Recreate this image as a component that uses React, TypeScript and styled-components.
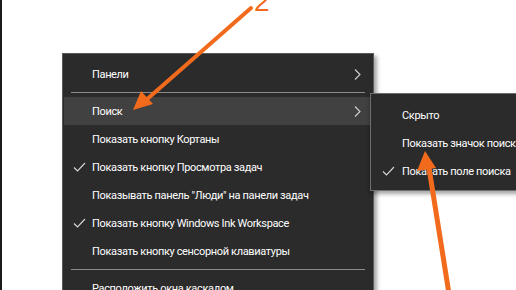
import * as React from 'react';
import styled, { createGlobalStyle } from 'styled-components';

const GlobalStyle = createGlobalStyle`
  html, body {
    margin: 0;
    padding: 0;
    background: #ffffff;
  }
  body {
    font-family: Roboto, "Noto Sans", "Liberation Sans", sans-serif;
  }
`;

const Page = styled.div`
  position: relative;
  width: 516px;
  height: 290px;
  overflow: hidden;
  box-sizing: border-box;
  border-left: 2px solid #1b1b1b;
  padding: 53px 0 0 60px;
  background: #fff;
`;

const Menu = styled.ul`
  list-style: none;
  margin: 0;
  padding: 6px 0;
  width: 310px;
  background: #2b2b2b;
  border: 1px solid #5a5a5a;
  box-shadow: 3px 3px 4px rgba(0, 0, 0, 0.35);
`;

const Item = styled.li<{ $active?: boolean }>`
  position: relative;
  display: flex;
  align-items: center;
  height: 28px;
  margin: 0 1px;
  padding-left: 28px;
  padding-right: 10px;
  background: ${(p) => (p.$active ? '#414141' : 'transparent')};
  color: #ffffff;
  font-size: 11px;
  letter-spacing: -0.35px;
  white-space: nowrap;
`;

const Label = styled.span`
  flex: 1;
`;

const Check = styled.svg`
  position: absolute;
  left: 9px;
  top: 9px;
  width: 13px;
  height: 10px;
`;

const Chevron = styled.svg`
  width: 7px;
  height: 11px;
  margin-right: 1px;
`;

const Separator = styled.li`
  height: 1px;
  margin: 4px 8px 4px 8px;
  background: #8a8a8a;
`;

const SubMenu = styled.ul`
  position: absolute;
  left: 368px;
  top: 93px;
  width: 170px;
  list-style: none;
  margin: 0;
  padding: 7px 0 5px;
  background: #2b2b2b;
  border: 1px solid #6e6e6e;
  box-shadow: 0 3px 4px rgba(0, 0, 0, 0.35);
  ${Item} {
    padding-left: 30px;
  }
  ${Check} {
    left: 10px;
  }
`;

const Annotations = styled.svg`
  position: absolute;
  left: 0;
  top: 0;
  width: 516px;
  height: 290px;
  pointer-events: none;
`;

const Step = styled.span`
  position: absolute;
  left: 252px;
  top: -12px;
  color: #f26b1d;
  font-family: "Liberation Sans", sans-serif;
  font-size: 28px;
  line-height: 28px;
`;

const CheckMark = () => (
  <Check viewBox="0 0 13 10">
    <polyline points="1,5.5 4.5,9 12,1" fill="none" stroke="#d8d8d8" strokeWidth="1.1" />
  </Check>
);

const Arrow = () => (
  <Chevron viewBox="0 0 7 11">
    <polyline points="1,0.5 6,5.5 1,10.5" fill="none" stroke="#d0d0d0" strokeWidth="1.1" />
  </Chevron>
);

type Entry = { label?: string; checked?: boolean; sub?: boolean; active?: boolean; sep?: boolean };

const mainItems: Entry[] = [
  { label: 'Панели', sub: true },
  { sep: true },
  { label: 'Поиск', sub: true, active: true },
  { label: 'Показать кнопку Кортаны' },
  { label: 'Показать кнопку Просмотра задач', checked: true },
  { label: 'Показывать панель "Люди" на панели задач' },
  { label: 'Показать кнопку Windows Ink Workspace', checked: true },
  { label: 'Показать кнопку сенсорной клавиатуры' },
  { sep: true },
  { label: 'Расположить окна каскадом' },
];

const subItems: Entry[] = [
  { label: 'Скрыто' },
  { label: 'Показать значок поиска' },
  { label: 'Показать поле поиска', checked: true },
];

const renderItems = (items: Entry[]) =>
  items.map((it, i) =>
    it.sep ? (
      <Separator key={i} />
    ) : (
      <Item key={i} $active={it.active}>
        {it.checked && <CheckMark />}
        <Label>{it.label}</Label>
        {it.sub && <Arrow />}
      </Item>
    )
  );

export default function App() {
  return (
    <>
      <GlobalStyle />
      <Page>
        <Menu>{renderItems(mainItems)}</Menu>
        <SubMenu>{renderItems(subItems)}</SubMenu>

        <Step>2</Step>
        <Annotations viewBox="0 0 516 290">
          <line x1="249" y1="8" x2="143" y2="101" stroke="#f26b1d" strokeWidth="4" strokeLinecap="round" />
          <polygon points="131,110 139,91 151,104" fill="#f26b1d" />
          <line x1="448" y1="300" x2="427" y2="168" stroke="#f26b1d" strokeWidth="5" />
          <polygon points="423,151 415,171 434,168" fill="#f26b1d" />
        </Annotations>
      </Page>
    </>
  );
}
